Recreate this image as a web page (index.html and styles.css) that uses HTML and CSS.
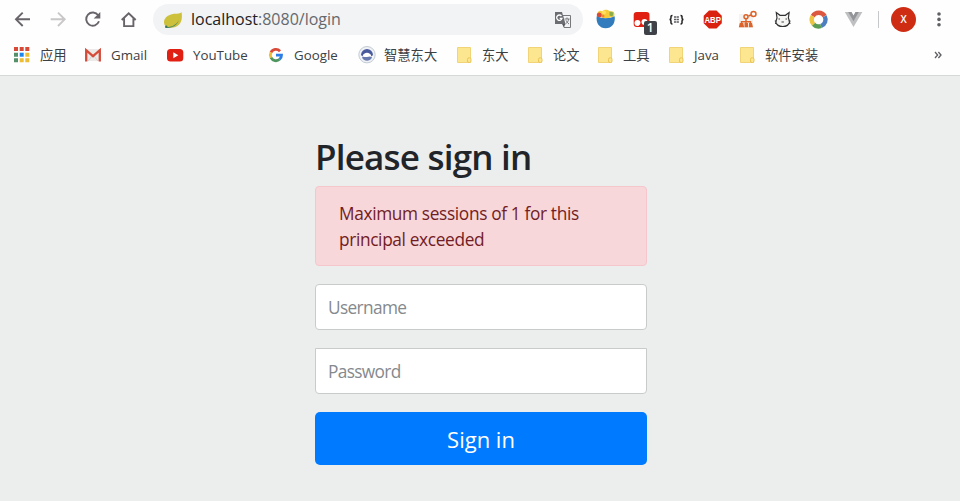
FILE: index.html
```html
<!DOCTYPE html>
<html lang="en">
<head>
<meta charset="utf-8">
<title>Please sign in</title>
<link rel="stylesheet" href="styles.css">
</head>
<body>
<svg width="0" height="0" class="defs">
  <symbol id="folder" viewBox="0 0 16 18">
    <path d="M1.500 1.500h13v15h-13z" fill="#fde690" stroke="#f2d478"/>
    <rect x="11.500" y="11.800" width="3.500" height="4.700" rx="1.500" fill="#fde690" stroke="#e9c558"/>
  </symbol>
</svg>
<header class="browser">
  <div class="toolbar">
    <nav class="nav">
      <svg class="slot" viewBox="0 0 35.4 31"><path d="M25 15.300H11.500M17.700 8.600L11 15.300l6.700 6.700" class="line"/></svg>
      <svg class="slot" viewBox="0 0 35.4 31"><path d="M10.700 15.300H24M18 8.600l6.700 6.700L18 22" class="line faded"/></svg>
      <svg class="slot" viewBox="0 0 35.4 31"><path d="M23.200 11.300A6.600 6.600 0 1 0 24 17.300" class="line"/><path d="M25.300 8v6.600h-6.600z" fill="#68646a"/></svg>
      <svg class="slot" viewBox="0 0 35.4 31"><path d="M10.700 16l7-6.600 7 6.600M13.100 14.600v7.500h9.300v-7.500" class="line"/></svg>
    </nav>
    <div class="omnibox">
      <svg width="20" height="20" viewBox="0 0 20 20"><path d="M18.500 2c-1.500 2-5 1.500-8.500 2C4 5 .8 8.500 1 12.500c.1 3 2 5 5.500 5.200C15 18.500 20.500 13 18.500 2z" fill="#cdc03b"/><path d="M2.500 17c7 .3 11-2.500 13.500-7-2 5.500-6 8.200-13.500 8z" fill="#4e8a68"/><circle cx="3.300" cy="16.800" r="1.200" fill="#3d7959"/></svg>
      <span class="url">localhost<span class="path">:8080/login</span></span>
      <svg class="translate" width="18" height="18" viewBox="0 0 18 18"><path d="M8.500 4.500h8v12H10z" fill="#f1f3f4" stroke="#77797d"/><path d="M1 1h7l3.500 12H1z" fill="#6b6d72"/><path d="M7.500 5A2.700 2.700 0 1 0 8 7.400H5.700" fill="none" stroke="#fff" stroke-width="1.300"/><path d="M10.600 8h5M13 6.500V8m1.700 0c-.4 2.500-1.700 4-3.200 5m.5-3.700c.7 1.500 1.500 2.700 3 3.700" fill="none" stroke="#77797d"/><path d="M8 13h3.300l-1.500 3z" fill="#55575c"/></svg>
    </div>
    <div class="extensions">
      <svg class="slot" viewBox="0 0 35.4 31"><path d="M9.500 12.500c-1.500-5 3-7 4.500-5 2-2.500 6-2.500 8 0 3-1 5.500 1.500 4 5l-8 2z" fill="#f4cb38"/><circle cx="11.300" cy="11" r="2.500" fill="#d84b38"/><path d="M21.500 7.500l4 1-1 4-3-1z" fill="#8aac4b"/><circle cx="16" cy="8.500" r="2" fill="#ffdf63"/><circle cx="15" cy="12" r="1.500" fill="#e88735"/><path d="M8.700 12.200c5 2.600 13 2.600 18 0 1 7-3 12.100-9 12.100s-10-5.100-9-12.100z" fill="#327cbe"/></svg>
      <div class="slot badged">
        <svg viewBox="0 0 35.400 31"><rect x="9.700" y="8" width="15.800" height="15" rx="3" fill="#df2012"/><circle cx="13.500" cy="19" r="3" fill="#fff"/><circle cx="20.500" cy="18" r="3" fill="#fff"/><path d="M14 23l3-4 2 4z" fill="#df2012"/></svg>
        <span class="badge">1</span>
      </div>
      <svg class="slot" viewBox="0 0 35.400 31"><path d="M13.500 11.500c-2 0-1.500 1.500-1.500 2.500s-.5 1.500-1.500 1.500c1 0 1.500.5 1.500 1.500s-.5 3 1.500 3M21.500 11.500c2 0 1.500 1.500 1.500 2.500s.5 1.500 1.500 1.500c-1 0-1.500.5-1.500 1.500s.5 3-1.500 3" fill="none" stroke="#222" stroke-width="1.500"/><path d="M15 13h5M15 15.500h5M15 18h5" stroke="#5c5c60" stroke-width="1.700" stroke-dasharray="2.200 .5"/></svg>
      <svg class="slot" viewBox="0 0 35.400 31"><path d="M14 6.500h7.500l5.300 5.300v7.500l-5.300 5.200H14l-5.300-5.200v-7.500z" fill="#d92210"/><text x="9.400" y="19.200" textLength="16.600" lengthAdjust="spacingAndGlyphs" class="abp">ABP</text></svg>
      <svg class="slot" viewBox="0 0 35.400 31"><path d="M9 10h14v14H9z" fill="#f4f3f1"/><g fill="none" stroke="#dc642a" stroke-width="1.500"><circle cx="23.500" cy="10" r="2.500"/><circle cx="16" cy="12.700" r="2"/><path d="M16 14.500v5M11.500 20v-2.300h9V20M18.500 12l2.500-1"/></g><g fill="#dc642a"><path d="M9.800 19h3.400l1 4.200H8.800zM14.500 19H18v4.200h-3.500zM19 19h3l1 4.200h-4.200z"/></g></svg>
      <svg class="slot" viewBox="0 0 35.400 31"><path d="M12 14l-.7-5.500 3.700 2.800h5.400l3.700-2.800-.7 5.500 1.300 4c-1 3.500-3.500 4.500-7 4.500s-6-1-7-4.500z" fill="#f5f5f3" stroke="#333" stroke-width="1.200"/><path d="M13.500 15H15M20.500 15H22M9.800 17h2M23.500 17h2M10 19.500h2M23.500 19.500h2M16.500 18h2.400" stroke="#444"/></svg>
      <svg class="slot" viewBox="0 0 35.400 31"><g fill="none" stroke-width="4.400"><path d="M11.700 12.200A6.900 6.900 0 0 1 23.700 12.200" stroke="#dc573f"/><path d="M23.700 12.200A6.900 6.900 0 0 1 20 22" stroke="#4d7fc0"/><path d="M20 22A6.900 6.900 0 0 1 12.500 20.200" stroke="#5a9c56"/><path d="M12.500 20.200A6.900 6.900 0 0 1 11.700 12.200" stroke="#edc344"/></g></svg>
      <svg class="slot" viewBox="0 0 35.400 31"><path d="M8.800 8h6.500l2.200 4 2.400-4h6.500l-8.900 15z" fill="#bfc0c2"/><path d="M12.200 8h3.300l2 3.500 2-3.500h3.300l-5.300 9.200z" fill="#929497"/></svg>
    </div>
    <span class="divider"></span>
    <span class="avatar">X</span>
    <svg class="dots" width="6" height="17" viewBox="0 0 6 17" fill="#5f6065"><circle cx="3" cy="3" r="1.800"/><circle cx="3" cy="8.400" r="1.800"/><circle cx="3" cy="13.800" r="1.800"/></svg>
  </div>
  <div class="bookmarks">
    <a class="bm"><svg viewBox="0 0 16 18"><g fill="#d64a37"><path d="M0 1h4v4H0zM5.700 1h4v4h-4zM11.300 1h4v4h-4z"/></g><path d="M0 6.700h4v4H0zM0 12.300h4v4H0z" fill="#55906a"/><path d="M5.700 6.700h4v4h-4z" fill="#1c86ee"/><path d="M11.300 6.700h4v4h-4zM5.700 12.300h4v4h-4zM11.300 12.300h4v4h-4z" fill="#edbd35"/></svg><span class="cjk">应用</span></a>
    <a class="bm w-gmail"><svg viewBox="0 0 16 18"><path d="M1 3h14v12H1z" fill="#eceae8"/><path d="M3 15l5-6 5 6" fill="none" stroke="#d5d3d1"/><path d="M1.200 15.500V4.200L8 10.200l6.800-6V15.500" fill="none" stroke="#d54b3a" stroke-width="2.300"/></svg>Gmail</a>
    <a class="bm w-youtube"><svg viewBox="0 0 16 18"><rect x="0" y="3" width="16.300" height="12.500" rx="3.500" fill="#df2012"/><path d="M6.300 6.300v6l5-3z" fill="#fff"/></svg>YouTube</a>
    <a class="bm w-google"><svg viewBox="0 0 16 18"><g fill="none" stroke-width="2.800"><path d="M3 6.500A5.500 5.500 0 0 1 12 5.200" stroke="#d94a38"/><path d="M3 6.500A5.500 5.500 0 0 0 3 11.700" stroke="#edbd35"/><path d="M3 11.700A5.500 5.500 0 0 0 11.600 13.300" stroke="#4f9560"/><path d="M8 9.200h5.500A5.400 5.400 0 0 1 11.600 13.300" stroke="#2c7ee6"/></g></svg>Google</a>
    <a class="bm w-neu"><svg viewBox="0 0 16 18"><circle cx="9" cy="8.700" r="8.200" fill="#eef1f5" stroke="#c5cbd5"/><circle cx="9" cy="8.700" r="6" fill="#fff"/><path d="M3 9a6 6 0 0 1 12 0l-1.500 1.500c-1-5-8-5-9 0z" fill="#48599c"/><path d="M4 11c2-1 3 .5 5 0s3-1 5 0c-1 5-9 5-10 0z" fill="#6879ae"/></svg><span class="cjk">智慧东大</span></a>
    <a class="bm w-folder1"><svg><use href="#folder"/></svg><span class="cjk">东大</span></a>
    <a class="bm w-folder2"><svg><use href="#folder"/></svg><span class="cjk">论文</span></a>
    <a class="bm w-folder3"><svg><use href="#folder"/></svg><span class="cjk">工具</span></a>
    <a class="bm w-folder4"><svg><use href="#folder"/></svg>Java</a>
    <a class="bm w-folder5"><svg><use href="#folder"/></svg><span class="cjk">软件安装</span></a>
    <svg class="more" viewBox="0 0 8 8"><path d="M1 1l2.600 3L1 7M4.400 1L7 4 4.400 7" fill="none" stroke="#5f6065" stroke-width="1.300"/></svg>
  </div>
</header>
<main class="page">
  <form class="signin">
    <h1>Please sign in</h1>
    <div class="alert">Maximum sessions of 1 for this<br>principal exceeded</div>
    <input class="field" type="text" placeholder="Username">
    <input class="field password" type="password" placeholder="Password">
    <button class="submit" type="button">Sign in</button>
  </form>
</main>
</body>
</html>
```
FILE: styles.css
```css
* { box-sizing: border-box; }
body {
  margin: 0;
  height: 501px;
  overflow: hidden;
  display: flex;
  flex-direction: column;
  background: #eceeed;
  font-family: "Open Sans", "Noto Sans CJK SC", sans-serif;
}
.defs { position: absolute; }
svg { display: block; flex: none; }
.browser { height: 76px; background: #fefefe; border-bottom: 1px solid #d4d8d7; flex: none; }
.toolbar { display: flex; align-items: center; height: 31px; margin-top: 4px; }
.nav { display: flex; width: 148.4px; margin-left: 4.6px; }
.slot { width: 35.4px; height: 31px; flex: none; }
.line { fill: none; stroke: #68646a; stroke-width: 1.9; }
.faded { stroke: #c9c7c8; }
.omnibox {
  width: 430px;
  height: 31px;
  border-radius: 16px;
  background: #f1f3f5;
  display: flex;
  align-items: center;
  padding: 0 11px 0 10px;
}
.url { margin-left: 8px; font-size: 16px; line-height: 22px; padding-bottom: 1px; color: #202124; }
.path { color: #66686c; }
.translate { margin-left: auto; }
.extensions { display: flex; margin-left: 5.4px; }
.badged { position: relative; }
.badge {
  position: absolute;
  left: 20px;
  top: 17px;
  width: 13px;
  height: 14px;
  border-radius: 2px;
  background: #3e4248;
  color: #fff;
  font: 600 12px/14px "Open Sans", sans-serif;
  text-align: center;
}
.abp { font: bold 9.6px "Liberation Sans", sans-serif; fill: #fff; }
.divider { width: 1px; height: 17px; background: #c6c8ca; margin-left: 6.6px; }
.avatar {
  width: 25px;
  height: 25px;
  border-radius: 50%;
  margin-left: 12px;
  background: #cf2d13;
  color: #fff;
  font: 600 10px/25px "Open Sans", sans-serif;
  text-align: center;
}
.dots { margin-left: 20px; }
.bookmarks { display: flex; align-items: center; height: 40px; padding-left: 14px; }
.bm {
  display: flex;
  align-items: center;
  gap: 10px;
  width: 71px;
  font-size: 13.3px;
  white-space: nowrap;
  color: #3c4043;
  flex: none;
}
.bm svg { width: 16px; height: 18px; overflow: visible; }
.cjk { padding-bottom: 2px; }
.w-gmail { width: 82px; }
.w-youtube { width: 101px; }
.w-google { width: 90px; }
.w-neu { width: 98px; }
.w-folder2 { width: 70px; }
.w-folder5 { width: 195px; }
.bookmarks .more { width: 8px; height: 8px; }
.page { flex: 1; display: flex; justify-content: center; }
.signin { width: 332px; margin-left: 2px; padding-top: 60px; display: flex; flex-direction: column; }
h1 {
  margin: 0 0 8px;
  font-size: 35px;
  line-height: 42px;
  font-weight: 600;
  letter-spacing: -.8px;
  color: #212529;
  white-space: nowrap;
}
.alert {
  height: 80px;
  padding: 14px 23px 12px;
  border: 1px solid #f5c6cb;
  border-radius: 4px;
  background: #f7d7da;
  color: #721c24;
  font-size: 17.3px;
  line-height: 26px;
  letter-spacing: -.35px;
  white-space: nowrap;
}
.field {
  width: 332px;
  height: 46px;
  margin-top: 18px;
  padding: 0 12px;
  border: 1px solid #c8cbca;
  border-radius: 4px;
  background: #fff;
  font: 17.3px "Open Sans", sans-serif;
  letter-spacing: -.65px;
}
.field::placeholder { color: #85898d; opacity: 1; }
.password { border-top-left-radius: 0; border-top-right-radius: 0; }
.submit {
  height: 53px;
  margin-top: 18px;
  padding: 0;
  border: 0;
  border-radius: 5px;
  background: #007bff;
  color: #fff;
  font: 22px "Open Sans", sans-serif;
}
```
